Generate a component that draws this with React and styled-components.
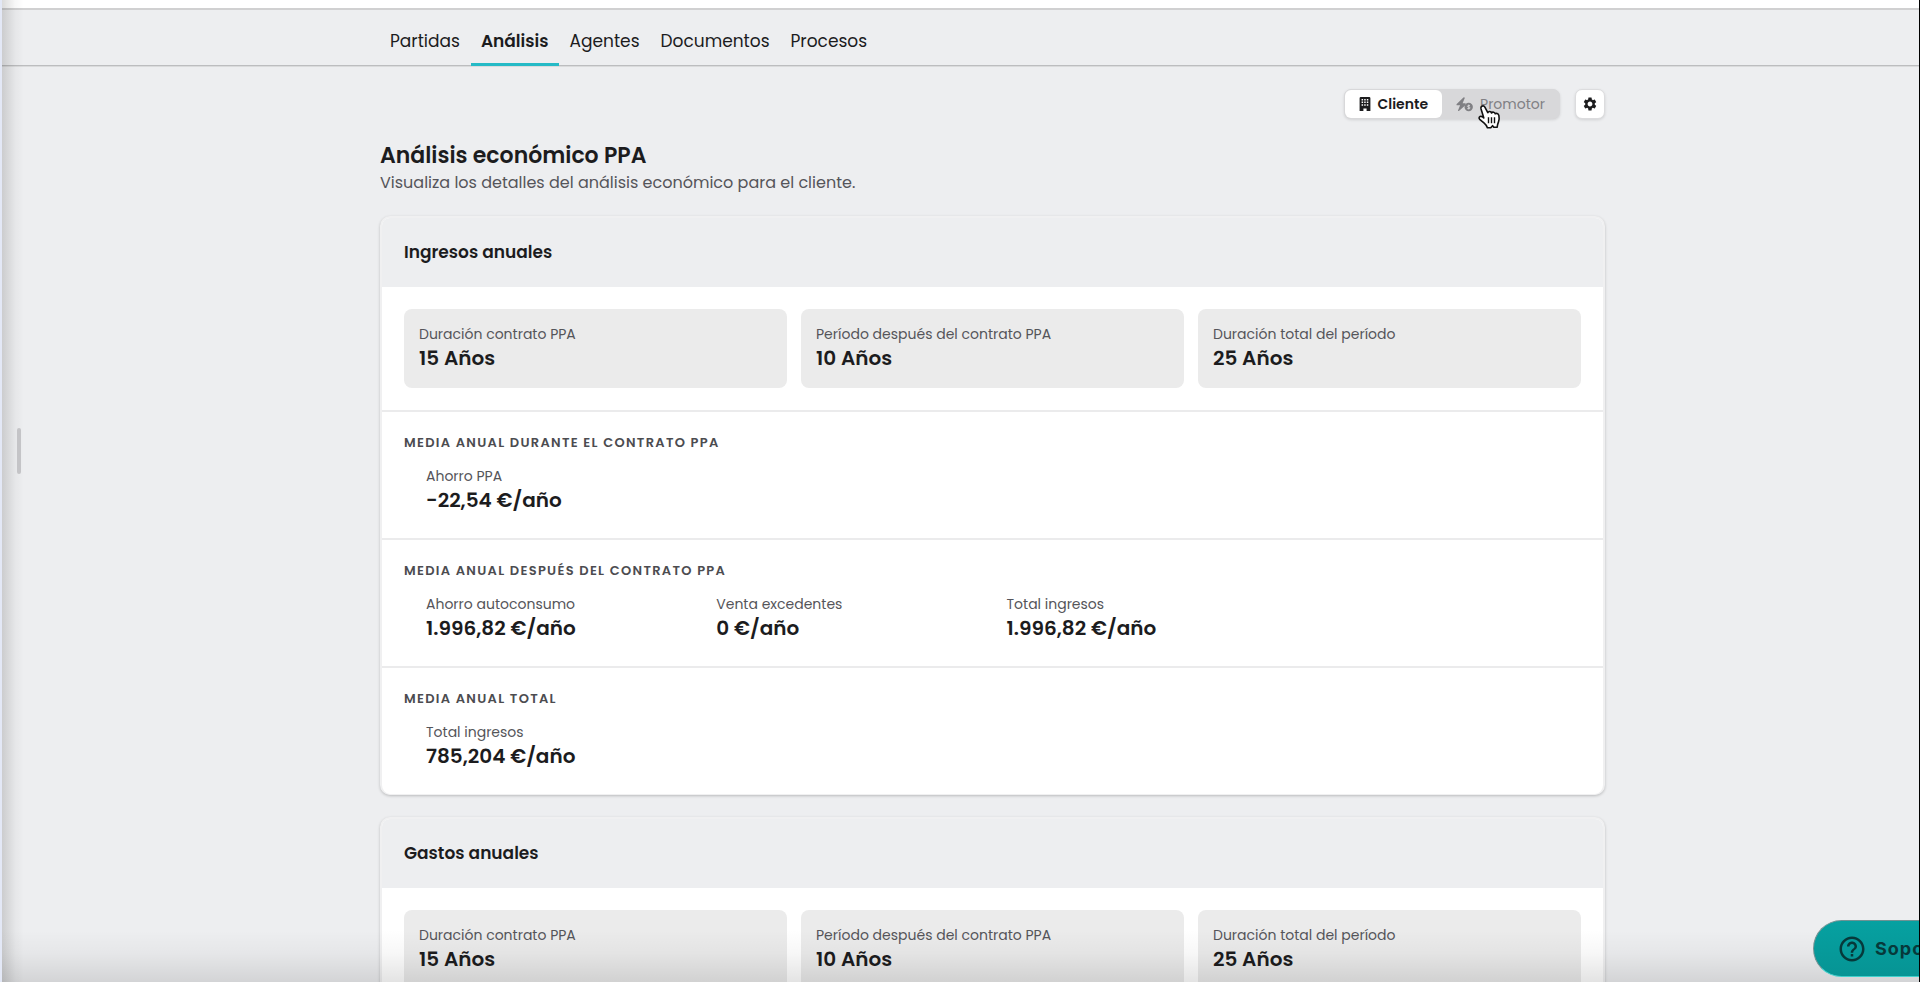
import { useState } from "react";
import styled, { createGlobalStyle } from "styled-components";
import { MdHelpOutline, MdSettings } from "react-icons/md";

const GlobalStyle = createGlobalStyle`
  * {
    box-sizing: border-box;
  }
  body {
    margin: 0;
    background: #edeef0;
    color: #1c1c1e;
    font-family: Poppins, Inter, sans-serif;
  }
  h1, h2, h3, p, dl, dt, dd {
    margin: 0;
  }
  button {
    font-family: inherit;
    cursor: pointer;
  }
`;

const Page = styled.div`
  position: relative;
  height: 100vh;
  overflow: hidden;
  border-left: 2px solid #e3e8f6;
  border-right: 1px solid #000;
`;

const TopBar = styled.header`
  height: 10px;
  background: #fff;
  border-bottom: 2px solid #d0d0d1;
`;

const Nav = styled.nav`
  padding-left: 64px;
  border-bottom: 1px solid #bcbdbf;
  box-shadow: 0 1px 0 #dadbdc;
`;

const Container = styled.div`
  max-width: 1225px;
  margin: 0 auto;
`;

const Tabs = styled(Container)`
  display: flex;
  gap: 1px;
`;

const Tab = styled.a`
  padding: 19px 10px 10px;
  margin-bottom: -1px;
  border-bottom: 3px solid ${(props) => (props.$active ? "#25bac6" : "transparent")};
  color: inherit;
  font-size: 17px;
  font-weight: ${(props) => (props.$active ? 600 : 400)};
  line-height: 24px;
  text-decoration: none;
`;

const Main = styled.main`
  padding: 23px 0 24px 64px;
`;

const Toolbar = styled.div`
  display: flex;
  justify-content: flex-end;
  gap: 15px;
`;

const Toggle = styled.div`
  display: flex;
  border: 1px solid #d8d8da;
  border-radius: 7px;
  background: #d8d8da;
  box-shadow: 0 1px 3px rgba(0, 0, 0, 0.12);
`;

const ToggleButton = styled.button`
  position: relative;
  display: flex;
  align-items: center;
  gap: 7px;
  height: 28px;
  padding: 0 14px;
  border: none;
  border-radius: 6px;
  background: ${(props) => (props.$active ? "#fff" : "transparent")};
  color: ${(props) => (props.$active ? "#1c1c1e" : "#808084")};
  font-size: 14px;
  font-weight: ${(props) => (props.$active ? 600 : 400)};
`;

const IconButton = styled.button`
  display: flex;
  align-items: center;
  justify-content: center;
  width: 30px;
  height: 30px;
  padding: 0;
  border: 1px solid #dcdcde;
  border-radius: 7px;
  background: #fff;
  color: #1c1c1e;
  font-size: 16px;
  box-shadow: 0 1px 3px rgba(0, 0, 0, 0.12);
`;

const Pointer = styled.svg`
  position: absolute;
  top: 14px;
  left: 35px;
  pointer-events: none;
`;

const Title = styled.h1`
  margin-top: 21px;
  font-size: 22px;
  font-weight: 600;
  line-height: 32px;
`;

const Subtitle = styled.p`
  color: #55555a;
  font-size: 16px;
  line-height: 22px;
`;

const Card = styled.section`
  margin-top: 22px;
  border: 2px solid #f0f0f1;
  border-bottom-width: 1px;
  border-radius: 10px;
  background: #fff;
  box-shadow: 0 1px 3px rgba(0, 0, 0, 0.22);
  overflow: hidden;
`;

const CardTitle = styled.h2`
  padding: 20px 22px 21px;
  background: #edeef0;
  font-size: 17px;
  font-weight: 600;
  line-height: 28px;
`;

const Tiles = styled.div`
  display: grid;
  grid-template-columns: repeat(3, 1fr);
  gap: 14px;
  padding: 22px;
`;

const Tile = styled.dl`
  padding: 15px 15px 16px;
  border-radius: 8px;
  background: #ebebeb;
`;

const Label = styled.dt`
  color: #55555a;
  font-size: 14px;
  line-height: 20px;
`;

const Value = styled.dd`
  font-size: 20px;
  font-weight: 600;
  line-height: 28px;
`;

const Block = styled.div`
  padding: 21px 22px 24px;
  border-top: 2px solid #ebebec;
`;

const BlockTitle = styled.h3`
  color: #4c4c50;
  font-size: 13px;
  font-weight: 600;
  letter-spacing: 0.1em;
  line-height: 20px;
  text-transform: uppercase;
`;

const Stats = styled.div`
  display: grid;
  grid-template-columns: repeat(4, 1fr);
  gap: 6px;
  padding: 13px 0 0 22px;
`;

const Handle = styled.div`
  position: absolute;
  top: 428px;
  left: 15px;
  width: 4px;
  height: 46px;
  border-radius: 2px;
  background: #c4c4c7;
`;

const SideShade = styled.div`
  position: absolute;
  top: 0;
  bottom: 0;
  left: 0;
  width: 22px;
  background: linear-gradient(to right, rgba(0, 0, 0, 0.14), rgba(0, 0, 0, 0.03) 60%, transparent);
  pointer-events: none;
`;

const BottomShade = styled.div`
  position: absolute;
  right: 0;
  bottom: 0;
  left: 0;
  height: 52px;
  background: linear-gradient(to top, rgba(0, 0, 0, 0.11), rgba(0, 0, 0, 0.03) 55%, transparent);
  pointer-events: none;
`;

const Support = styled.button`
  position: absolute;
  right: -48px;
  bottom: 5px;
  display: flex;
  align-items: center;
  gap: 8px;
  width: 154px;
  height: 57px;
  padding: 0 23px;
  border: 1px solid #6f9293;
  border-bottom-color: #3fd0cc;
  border-radius: 29px;
  background: linear-gradient(#06a1a1, #069494);
  color: #06393a;
  font-family: Inter, sans-serif;
  font-size: 18px;
  font-weight: 700;
  letter-spacing: 1px;

  svg {
    flex-shrink: 0;
  }
`;

const BuildingIcon = () => (
  <svg width="12" height="14" viewBox="0 0 12 14" aria-hidden="true">
    <path
      fill="currentColor"
      fillRule="evenodd"
      d="M1.8 0h8.4Q11.4 0 11.4 1.2V14H7.6v-2.4H4.4V14H.6V1.2Q.6 0 1.8 0zM2.6 2v1.5h1.5V2zm2.6 0v1.5h1.5V2zm2.6 0v1.5h1.5V2zM2.6 4.6v1.5h1.5V4.6zm2.6 0v1.5h1.5V4.6zm2.6 0v1.5h1.5V4.6zM2.6 7.2v1.5h1.5V7.2zm2.6 0v1.5h1.5V7.2zm2.6 0v1.5h1.5V7.2z"
    />
  </svg>
);

const EnergyCoinIcon = () => (
  <svg width="17" height="15" viewBox="0 0 17 15" aria-hidden="true">
    <path
      fill="currentColor"
      d="M7.4.4.7 7.1q-.6 1 .5 1.2h2.9L2 13.4q0 .9.9.6l5.9-5.3 1-1.6q.1-.8-.7-.8H6.6L8.8 1Q8.5-.2 7.4.4z"
    />
    <circle cx="12.7" cy="10" r="4.2" fill="currentColor" />
    <path
      fill="none"
      stroke="#d8d8da"
      strokeWidth="0.9"
      d="M14 8.6h-1.6q-1 .1-1 .7t1.3.7 1.3.9-1 .7h-1.7M12.7 7.6v4.8"
    />
  </svg>
);

const HandPointer = () => (
  <Pointer width="25" height="26" viewBox="0 0 25 26" aria-hidden="true">
    <path
      fill="#fff"
      stroke="#111"
      strokeWidth="1.6"
      strokeLinejoin="round"
      d="M4.6 2.4q2.2-1.3 3.4.9l2.8 5.4q.6-1.4 2-1.2 1.3.2 1.7 1.4.8-1 2.1-.7t1.6 1.6q.8-.7 1.9-.3 1.5.6 1.8 2.2.7 3.6-.4 6.2-1 2.4-1.3 5.2l-3.4.2-1.2-1.6-1.6 1.9-3.6.2q-1-2.8-3.2-4.6l-4.5-3.8q-1.3-1.9.2-2.8 2-.8 3.9 1.3L4 4.8q-.4-1.6.6-2.4z"
    />
    <path fill="none" stroke="#111" strokeWidth="1.4" d="M11.5 13.2v6M14.5 13.2v6M17.5 13.2v6" />
  </Pointer>
);

const tabs = ["Partidas", "Análisis", "Agentes", "Documentos", "Procesos"];

const periods = [
  ["Duración contrato PPA", "15 Años"],
  ["Período después del contrato PPA", "10 Años"],
  ["Duración total del período", "25 Años"],
];

const income = [
  { title: "Media anual durante el contrato PPA", stats: [["Ahorro PPA", "-22,54 €/año"]] },
  {
    title: "Media anual después del contrato PPA",
    stats: [
      ["Ahorro autoconsumo", "1.996,82 €/año"],
      ["Venta excedentes", "0 €/año"],
      ["Total ingresos", "1.996,82 €/año"],
    ],
  },
  { title: "Media anual total", stats: [["Total ingresos", "785,204 €/año"]] },
];

const AnnualCard = ({ title, blocks }) => (
  <Card>
    <CardTitle>{title}</CardTitle>
    <Tiles>
      {periods.map(([label, value]) => (
        <Tile key={label}>
          <Label>{label}</Label>
          <Value>{value}</Value>
        </Tile>
      ))}
    </Tiles>
    {blocks.map((block) => (
      <Block key={block.title}>
        <BlockTitle>{block.title}</BlockTitle>
        <Stats>
          {block.stats.map(([label, value]) => (
            <dl key={label}>
              <Label>{label}</Label>
              <Value>{value}</Value>
            </dl>
          ))}
        </Stats>
      </Block>
    ))}
  </Card>
);

const App = () => {
  const [view, setView] = useState("cliente");

  return (
    <Page>
      <GlobalStyle />
      <TopBar />
      <Nav>
        <Tabs>
          {tabs.map((tab) => (
            <Tab key={tab} href="#" $active={tab === "Análisis"}>
              {tab}
            </Tab>
          ))}
        </Tabs>
      </Nav>
      <Main>
        <Container>
          <Toolbar>
            <Toggle>
              <ToggleButton $active={view === "cliente"} onClick={() => setView("cliente")}>
                <BuildingIcon />
                Cliente
              </ToggleButton>
              <ToggleButton $active={view === "promotor"} onClick={() => setView("promotor")}>
                <EnergyCoinIcon />
                Promotor
                <HandPointer />
              </ToggleButton>
            </Toggle>
            <IconButton aria-label="Ajustes">
              <MdSettings />
            </IconButton>
          </Toolbar>
          <Title>Análisis económico PPA</Title>
          <Subtitle>Visualiza los detalles del análisis económico para el cliente.</Subtitle>
          <AnnualCard title="Ingresos anuales" blocks={income} />
          <AnnualCard title="Gastos anuales" blocks={[]} />
        </Container>
      </Main>
      <SideShade />
      <Handle />
      <BottomShade />
      <Support>
        <MdHelpOutline size={30} />
        Soporte
      </Support>
    </Page>
  );
};

export default App;
